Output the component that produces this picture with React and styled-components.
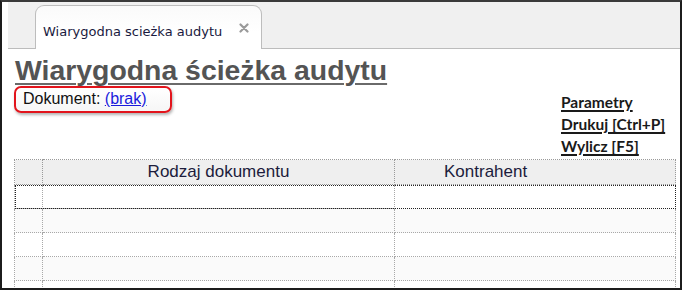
import React from 'react'
import styled, { createGlobalStyle } from 'styled-components'

const GlobalStyle = createGlobalStyle`
    html, body {
        margin: 0;
        padding: 0;
        background: #fff;
    }
`;

const rows = [
    { id: 1, focus: true, shade: false },
    { id: 2, focus: false, shade: true },
    { id: 3, focus: false, shade: false },
    { id: 4, focus: false, shade: true },
    { id: 5, focus: false, shade: false },
];

export default function App() {
    return (
        <>
            <GlobalStyle />
            <Frame>
                <TabBar>
                    <Tab>
                        <TabLabel>Wiarygodna scieżka audytu</TabLabel>
                        <CloseIcon viewBox="0 0 10 10">
                            <path d="M1.5 1.5 L8.5 8.5 M8.5 1.5 L1.5 8.5" stroke="#9a9a9a" strokeWidth="2.2" strokeLinecap="round" />
                        </CloseIcon>
                    </Tab>
                </TabBar>

                <Content>
                    <Title>Wiarygodna ścieżka audytu</Title>

                    <InfoRow>
                        <DocBox>
                            Dokument: <DocLink href="#">(brak)</DocLink>
                        </DocBox>
                        <Links>
                            <ActionLink>Parametry</ActionLink>
                            <ActionLink>Drukuj [Ctrl+P]</ActionLink>
                            <ActionLink>Wylicz [F5]</ActionLink>
                        </Links>
                    </InfoRow>

                    <Grid>
                        <colgroup>
                            <col style={{ width: 28 }} />
                            <col style={{ width: 352 }} />
                            <col />
                        </colgroup>
                        <thead>
                            <tr>
                                <HeadCell />
                                <HeadCell>Rodzaj dokumentu</HeadCell>
                                <HeadCell $indent>Kontrahent</HeadCell>
                            </tr>
                        </thead>
                        <tbody>
                            {rows.map(r => (
                                <Row key={r.id} $shade={r.shade} $focus={r.focus}>
                                    <Cell />
                                    <Cell />
                                    <Cell />
                                </Row>
                            ))}
                        </tbody>
                    </Grid>
                </Content>
            </Frame>
        </>
    )
}

const Frame = styled.div`
    width: 682px;
    height: 290px;
    box-sizing: border-box;
    border: 2px solid #1c1c1c;
    border-top-color: #3a3a3a;
    overflow: hidden;
    background: #fff;
    display: flex;
    flex-direction: column;
`;

const TabBar = styled.div`
    height: 47px;
    flex: none;
    box-sizing: border-box;
    background: #f0f0f0;
    border-bottom: 1px solid #bcbcbc;
    margin-left: 6px;
    padding-left: 27px;
    display: flex;
    align-items: flex-end;
`;

const Tab = styled.div`
    width: 227px;
    height: 44px;
    box-sizing: border-box;
    border: 1px solid #bdbdbd;
    border-bottom: none;
    border-radius: 9px 9px 0 0;
    background: linear-gradient(#fafafa, #ffffff 60%);
    margin-bottom: -1px;
    display: flex;
    align-items: flex-start;
    justify-content: space-between;
    padding: 14px 12px 0 7px;
`;

const TabLabel = styled.span`
    font-family: "DejaVu Sans", Verdana, sans-serif;
    font-size: 13px;
    color: #1a1a40;
    margin-top: 4px;
`;

const CloseIcon = styled.svg`
    width: 10px;
    height: 10px;
    margin-top: 3px;
`;

const Content = styled.div`
    padding: 6px 5px 0 10px;
    display: flex;
    flex-direction: column;
`;

const Title = styled.h1`
    margin: 0 0 0 3px;
    font-family: "Liberation Sans", Arial, sans-serif;
    font-size: 28.4px;
    line-height: 31px;
    font-weight: bold;
    color: #545454;
    text-decoration: underline;
    text-decoration-thickness: 2px;
    text-underline-offset: 3px;
    text-decoration-color: #6a6a6a;
`;

const InfoRow = styled.div`
    display: flex;
    justify-content: space-between;
    align-items: flex-start;
`;

const DocBox = styled.div`
    width: 158px;
    height: 27px;
    margin-left: 2px;
    box-sizing: border-box;
    border: 2px solid #e2141c;
    border-radius: 7px;
    box-shadow: 1px 2px 3px rgba(0, 0, 0, 0.3);
    background: linear-gradient(#ffffff, #f6f6f6);
    padding: 2px 0 0 7px;
    font-family: "Liberation Sans", Arial, sans-serif;
    font-size: 16px;
    line-height: 18px;
    color: #111;
`;

const DocLink = styled.a`
    color: #1a1adc;
    text-decoration: underline;
`;

const Links = styled.div`
    display: flex;
    flex-direction: column;
    align-items: flex-start;
    gap: 4px;
    width: 114px;
    padding-top: 7px;
`;

const ActionLink = styled.span`
    font-family: Lato, "Open Sans", sans-serif;
    font-weight: bold;
    font-size: 15.5px;
    line-height: 18px;
    color: #1a1a1a;
    text-decoration: underline;
    text-decoration-thickness: 1.5px;
    text-underline-offset: 2px;
    cursor: pointer;
`;

const Grid = styled.table`
    margin: 4px 0 0 2px;
    width: 662px;
    border-collapse: collapse;
    table-layout: fixed;
    font-family: "Liberation Sans", Arial, sans-serif;
`;

const HeadCell = styled.th`
    height: 24px;
    padding: 0 0 0 ${p => (p.$indent ? '49px' : '0')};
    background: #efefef;
    border: 1px dotted #9a9a9a;
    font-size: 17px;
    font-weight: normal;
    color: #1c1c3c;
    text-align: ${p => (p.$indent ? 'left' : 'center')};
    vertical-align: middle;
`;

const Row = styled.tr`
    height: 24px;
    background: ${p => (p.$shade ? '#fafafa' : '#fff')};
    outline: ${p => (p.$focus ? '1px dotted #222' : 'none')};
    outline-offset: -1px;
`;

const Cell = styled.td`
    border: 1px dotted #a8a8a8;
    padding: 0;
`;
